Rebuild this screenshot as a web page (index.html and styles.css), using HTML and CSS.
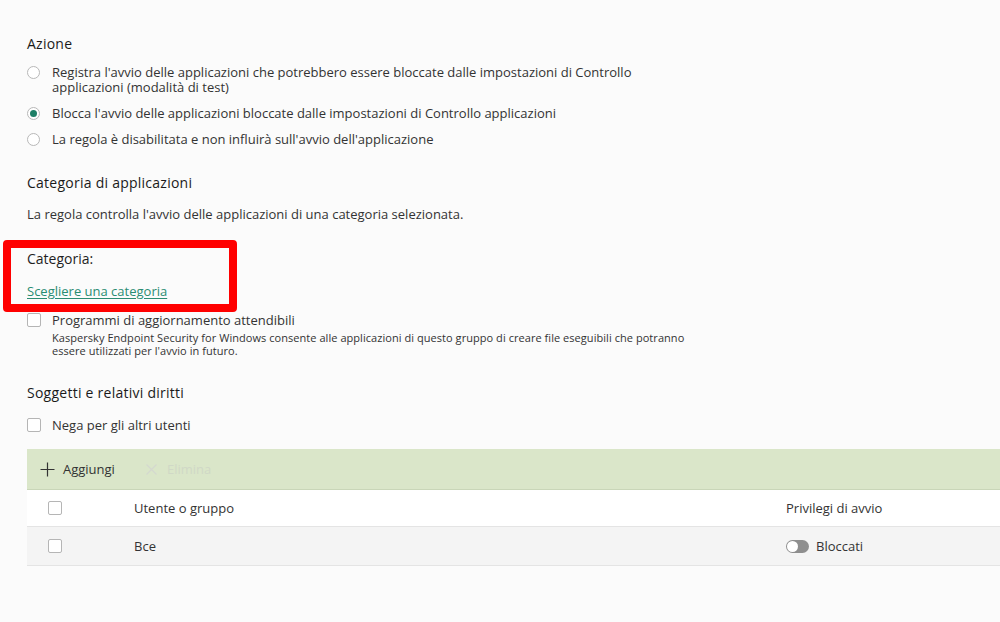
FILE: index.html
```html
<!DOCTYPE html>
<html lang="it">
<head>
<meta charset="utf-8">
<link rel="stylesheet" href="styles.css">
</head>
<body>
<div class="page">
  <section class="sec sec-action">
    <h2 class="title">Azione</h2>
    <div class="radios">
      <label class="radio r1"><span class="rb"></span><span class="rtext">Registra l'avvio delle applicazioni che potrebbero essere bloccate dalle impostazioni di Controllo<br>applicazioni (modalità di test)</span></label>
      <label class="radio r2"><span class="rb on"></span><span class="rtext">Blocca l'avvio delle applicazioni bloccate dalle impostazioni di Controllo applicazioni</span></label>
      <label class="radio r3"><span class="rb"></span><span class="rtext">La regola è disabilitata e non influirà sull'avvio dell'applicazione</span></label>
    </div>
  </section>

  <section class="sec sec-cat">
    <h2 class="title">Categoria di applicazioni</h2>
    <p class="desc">La regola controlla l'avvio delle applicazioni di una categoria selezionata.</p>
    <div class="catbox">
      <div class="highlight"></div>
      <div class="catlabel">Categoria:</div>
      <a class="link" href="#">Scegliere una categoria</a>
    </div>
    <div class="check check-trust">
      <span class="cb"></span>
      <div>
        <div class="ctext">Programmi di aggiornamento attendibili</div>
        <div class="small">Kaspersky Endpoint Security for Windows consente alle applicazioni di questo gruppo di creare file eseguibili che potranno<br>essere utilizzati per l'avvio in futuro.</div>
      </div>
    </div>
  </section>

  <section class="sec sec-subj">
    <h2 class="title">Soggetti e relativi diritti</h2>
    <div class="check"><span class="cb"></span><span class="ctext">Nega per gli altri utenti</span></div>
    <div class="table">
      <div class="toolbar">
        <span class="tbtn"><svg width="15" height="15" viewBox="0 0 15 15"><path d="M7.5 0.5V14.5M0.5 7.5H14.5" stroke="#333" stroke-width="1.2" fill="none"/></svg>Aggiungi</span>
        <span class="tbtn dis"><svg width="11" height="11" viewBox="0 0 11 11"><path d="M0.5 0.5L10.5 10.5M10.5 0.5L0.5 10.5" stroke="#d4d8cf" stroke-width="1.1" fill="none"/></svg>Elimina</span>
      </div>
      <div class="row head">
        <span class="c-check"><span class="cb"></span></span>
        <span class="c-user">Utente o gruppo</span>
        <span class="c-priv">Privilegi di avvio</span>
      </div>
      <div class="row data">
        <span class="c-check"><span class="cb"></span></span>
        <span class="c-user">Bce</span>
        <span class="c-priv"><span class="toggle"></span>Bloccati</span>
      </div>
    </div>
  </section>
</div>
</body>
</html>
```

FILE: styles.css
```css
* { box-sizing: border-box; }
html, body { margin: 0; padding: 0; }
body {
  background: #fbfbfb;
  font-family: "Open Sans", "Lato", sans-serif;
  color: #2b2b2b;
  width: 1000px;
  height: 622px;
  overflow: hidden;
}
.page { padding: 35px 0 0 27px; }
.title {
  margin: 0;
  font-size: 14px;
  font-weight: 500;
  letter-spacing: 0.25px;
  line-height: 18px;
  color: #1a1a1a;
}
.sec-action .title { margin-bottom: 12px; }
.radios { display: flex; flex-direction: column; }
.radio { display: flex; align-items: flex-start; gap: 12px; font-size: 13px; color: #333; }
.r1 { line-height: 15px; }
.r1 .rb { margin-top: 1px; }
.r2 { line-height: 18px; align-items: center; margin-top: 9px; }
.r3 { line-height: 18px; align-items: center; margin-top: 8px; }
.rb {
  width: 13px; height: 13px; border-radius: 50%;
  border: 1px solid #b8b8b8; background: #fff; flex: none;
  display: flex; align-items: center; justify-content: center;
}
.rb.on::after { content: ""; width: 7px; height: 7px; border-radius: 50%; background: #1e7f66; }

.sec-cat { margin-top: 26px; }
.desc { margin: 13px 0 0; font-size: 13px; line-height: 18px; color: #333; }
.catbox { position: relative; margin-top: 27px; height: 50px; }
.highlight {
  position: absolute; left: -24px; top: -10px; width: 234px; height: 72px;
  border: 8px solid #ff0000; border-radius: 4px;
}
.catlabel { font-size: 14px; line-height: 18px; color: #1f1f1f; }
.link { display: inline-block; margin-top: 14px; font-size: 13px; line-height: 18px; color: #2a8c72; text-decoration: underline; text-underline-offset: 2px; }
.check { display: flex; align-items: flex-start; gap: 11px; }
.check-trust { margin-top: 11px; }
.cb { width: 14px; height: 14px; border: 1px solid #b5b5b5; border-radius: 2px; background: #fff; flex: none; margin-top: 2px; }
.ctext { font-size: 13px; line-height: 18px; color: #333; }
.small { font-size: 11px; line-height: 13px; letter-spacing: 0.05px; color: #333; margin-top: 2px; }

.sec-subj { margin-top: 27px; }
.sec-subj .title { margin-bottom: 14px; }
.sec-subj .check { align-items: center; }
.sec-subj .check .cb { margin-top: 0; }
.table { margin-top: 15px; }
.toolbar {
  height: 41px; background: #dae6c9; border-bottom: 1px solid #c9d6b8;
  display: flex; align-items: center; padding-left: 13px; gap: 31px;
}
.tbtn { display: flex; align-items: center; gap: 8px; font-size: 13px; color: #333; }
.tbtn.dis { gap: 10px; color: #d0d8c6; }
.row { display: flex; align-items: center; font-size: 13px; color: #333; }
.row.head { height: 37px; background: #fff; border-bottom: 1px solid #e4e4e4; }
.row.data { height: 39px; background: #f4f4f4; border-bottom: 1px solid #e4e4e4; }
.c-check { width: 107px; padding-left: 21px; display: flex; }
.c-check .cb { margin-top: 0; }
.c-user { width: 652px; }
.c-priv { display: flex; align-items: center; gap: 7px; }
.toggle {
  position: relative; width: 23px; height: 13px; border-radius: 7px; background: #8e8e8e;
}
.toggle::after {
  content: ""; position: absolute; left: 1px; top: 1px; width: 11px; height: 11px; border-radius: 50%; background: #fff;
}
```
